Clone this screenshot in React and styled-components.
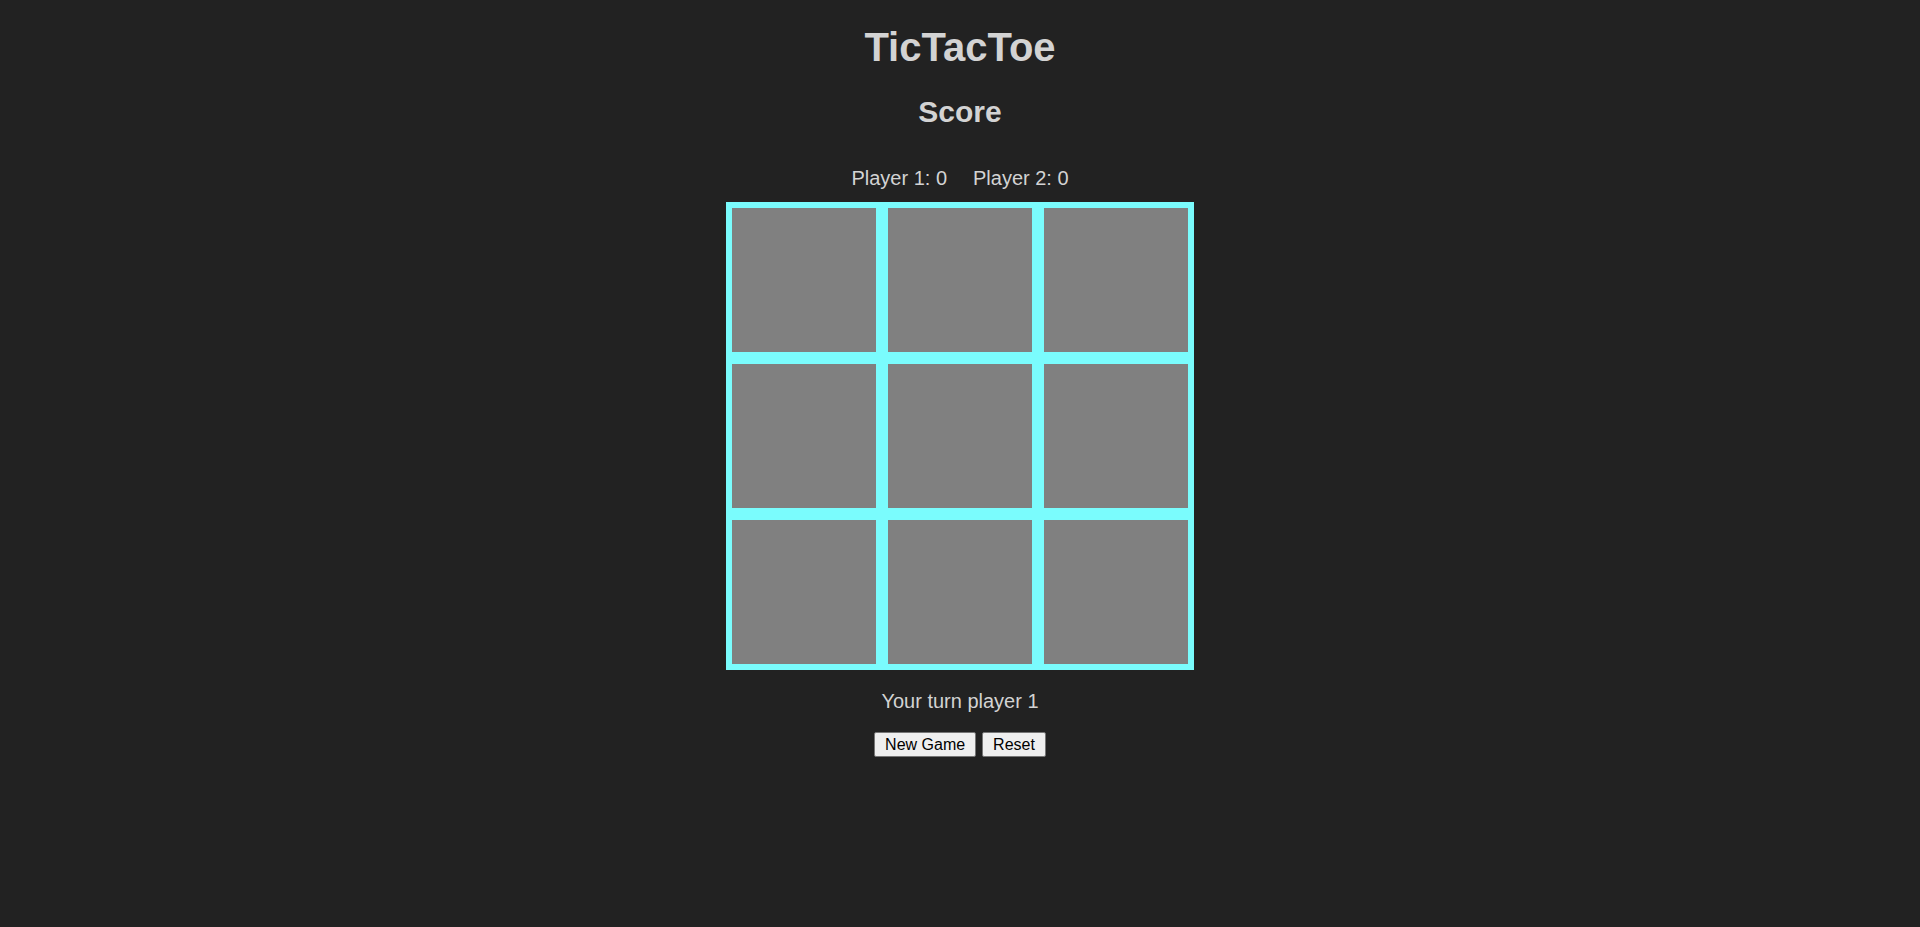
import React, { useState } from "react";
import styled, { createGlobalStyle } from "styled-components";

const GlobalStyle = createGlobalStyle`
  html, body {
    margin: 0;
    padding: 0;
    background: #222222;
  }
  body {
    font-family: "Liberation Sans", Arial, sans-serif;
    font-size: 20px;
    color: lightgray;
  }
`;

const Page = styled.div`
  min-height: 927px;
  display: flex;
  flex-direction: column;
  align-items: center;
  text-align: center;
`;

const Title = styled.h1`
  font-size: 40px;
  line-height: 46px;
  margin: 24px 0 0;
`;

const SubTitle = styled.h2`
  font-size: 30px;
  line-height: 34px;
  margin: 25px 0 0;
`;

const ScoreRow = styled.div`
  display: flex;
  gap: 26px;
  line-height: 23px;
  margin-top: 38px;
`;

const Board = styled.div`
  display: grid;
  grid-template-columns: repeat(3, 144px);
  grid-template-rows: repeat(3, 144px);
  gap: 12px;
  padding: 6px;
  margin-top: 12px;
  background: #7afcfd;
`;

const Cell = styled.div`
  background: #808080;
  display: flex;
  align-items: center;
  justify-content: center;
  font-size: 96px;
  font-weight: bold;
  color: #222222;
  cursor: pointer;
`;

const Status = styled.p`
  line-height: 23px;
  margin: 20px 0 0;
`;

const Controls = styled.div`
  display: flex;
  gap: 6px;
  margin-top: 19px;
`;

const Button = styled.button`
  height: 25px;
  padding: 0 10px;
  font-family: "Liberation Sans", Arial, sans-serif;
  font-size: 16px;
  color: #000000;
  background: #efefef;
  border: 1px solid #767676;
  border-radius: 2px;
  cursor: pointer;
`;

const lines = [
  [0, 1, 2], [3, 4, 5], [6, 7, 8],
  [0, 3, 6], [1, 4, 7], [2, 5, 8],
  [0, 4, 8], [2, 4, 6],
];

function winnerOf(cells) {
  for (const [a, b, c] of lines) {
    if (cells[a] && cells[a] === cells[b] && cells[a] === cells[c]) return cells[a];
  }
  return null;
}

export default function App() {
  const [cells, setCells] = useState(Array(9).fill(null));
  const [player, setPlayer] = useState(1);
  const [score, setScore] = useState({ 1: 0, 2: 0 });
  const [done, setDone] = useState(false);

  // Place a mark and check for a win
  const play = (i) => {
    if (done || cells[i]) return;
    const next = [...cells];
    next[i] = player === 1 ? "X" : "O";
    setCells(next);
    if (winnerOf(next)) {
      setScore({ ...score, [player]: score[player] + 1 });
      setDone(true);
    } else if (next.every(Boolean)) {
      setDone(true);
    } else {
      setPlayer(player === 1 ? 2 : 1);
    }
  };

  const newGame = () => {
    setCells(Array(9).fill(null));
    setPlayer(1);
    setDone(false);
  };

  const reset = () => {
    newGame();
    setScore({ 1: 0, 2: 0 });
  };

  const win = winnerOf(cells);
  let status = `Your turn player ${player}`;
  if (win) status = `Player ${player} wins!`;
  else if (done) status = "Draw!";

  return (
    <>
      <GlobalStyle />
      <Page>
        <Title>TicTacToe</Title>
        <SubTitle>Score</SubTitle>
        <ScoreRow>
          <span>Player 1: {score[1]}</span>
          <span>Player 2: {score[2]}</span>
        </ScoreRow>
        <Board>
          {cells.map((c, i) => (
            <Cell key={i} onClick={() => play(i)}>
              {c}
            </Cell>
          ))}
        </Board>
        <Status>{status}</Status>
        <Controls>
          <Button onClick={newGame}>New Game</Button>
          <Button onClick={reset}>Reset</Button>
        </Controls>
      </Page>
    </>
  );
}
